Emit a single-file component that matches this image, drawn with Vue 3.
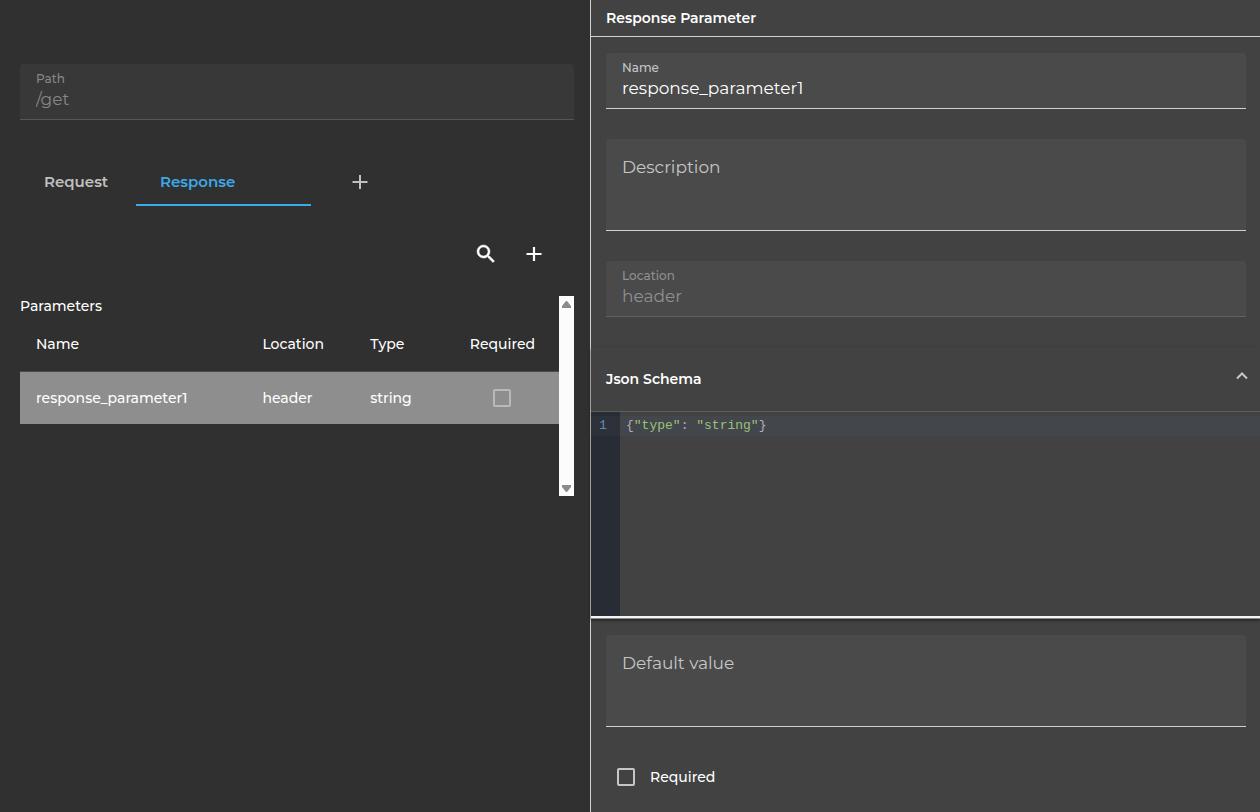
<script setup>
import { ref } from 'vue'

const path = ref('/get')
const name = ref('response_parameter1')
const description = ref('')
const location = ref('header')
const defaultValue = ref('')
const required = ref(false)
const activeTab = ref('Response')
const schemaOpen = ref(true)
const parameters = ref([
  { name: 'response_parameter1', location: 'header', type: 'string', required: false },
])
</script>

<template>
  <div class="page">
    <main class="operation">
      <div class="field disabled">
        <label for="path">Path</label>
        <input id="path" v-model="path" type="text" disabled />
      </div>

      <div class="tabs" role="tablist">
        <button class="tab" :class="{ active: activeTab === 'Request' }" role="tab" @click="activeTab = 'Request'">Request</button>
        <button class="tab wide" :class="{ active: activeTab === 'Response' }" role="tab" @click="activeTab = 'Response'">Response</button>
        <button class="tab add" aria-label="Add response">
          <svg width="24" height="24" viewBox="0 0 24 24"><path d="M4.500 12h15M12 5v14" fill="none" stroke="currentColor" stroke-width="2" /></svg>
        </button>
      </div>

      <div class="toolbar">
        <button class="icon-button" aria-label="Search">
          <svg width="24" height="24" viewBox="0 0 24 24"><path fill="currentColor" stroke="currentColor" stroke-width="0.5" d="M15.5 14h-.79l-.28-.27A6.47 6.47 0 0 0 16 9.5 6.5 6.5 0 1 0 9.5 16c1.61 0 3.09-.59 4.23-1.57l.27.28v.79l5 4.99L20.49 19l-4.99-5zm-6 0C7.01 14 5 11.99 5 9.5S7.01 5 9.5 5 14 7.01 14 9.5 11.99 14 9.5 14z" /></svg>
        </button>
        <button class="icon-button" aria-label="Add parameter">
          <svg width="24" height="24" viewBox="0 0 24 24"><path d="M4.500 12h15M12 5v14" fill="none" stroke="currentColor" stroke-width="2.200" /></svg>
        </button>
      </div>

      <div class="list">
        <div class="list-body">
          <table>
            <caption>Parameters</caption>
            <colgroup>
              <col class="c-name" /><col class="c-location" /><col class="c-type" /><col class="c-required" />
            </colgroup>
            <thead>
              <tr><th>Name</th><th>Location</th><th>Type</th><th class="center">Required</th></tr>
            </thead>
            <tbody>
              <tr v-for="p in parameters" :key="p.name">
                <td>{{ p.name }}</td>
                <td>{{ p.location }}</td>
                <td>{{ p.type }}</td>
                <td class="center"><input v-model="p.required" type="checkbox" :aria-label="'Required: ' + p.name" disabled /></td>
              </tr>
            </tbody>
          </table>
        </div>
        <div class="scroll-track" aria-hidden="true">
          <svg width="15" height="16" viewBox="0 0 15 16"><path d="M7 5h1l4 5v2H3v-2z" fill="#8b8b8b" /></svg>
          <svg width="15" height="16" viewBox="0 0 15 16"><path d="M3 5h9v2l-4 5H7L3 7z" fill="#8b8b8b" /></svg>
        </div>
      </div>
    </main>

    <aside class="detail">
      <h2>Response Parameter</h2>
      <div class="form">
        <div class="field">
          <label for="name">Name</label>
          <input id="name" v-model="name" type="text" />
        </div>
        <div class="field area">
          <label for="description">Description</label>
          <textarea id="description" v-model="description"></textarea>
        </div>
        <div class="field disabled">
          <label for="location">Location</label>
          <input id="location" v-model="location" type="text" disabled />
        </div>
      </div>

      <section class="schema">
        <button class="schema-header" :aria-expanded="schemaOpen" @click="schemaOpen = !schemaOpen">
          <span>Json Schema</span>
          <svg width="12" height="12" viewBox="0 0 12 12"><path d="M1 8.500l5-5 5 5" fill="none" stroke="#c6c6c6" stroke-width="2" /></svg>
        </button>
        <div v-if="schemaOpen" class="editor">
          <div class="gutter"><span>1</span></div>
          <div class="code" role="textbox" aria-label="Json Schema" contenteditable="true" spellcheck="false"><div class="line">{<b>"type"</b>: <b>"string"</b>}</div></div>
        </div>
      </section>

      <div class="form">
        <div class="field area">
          <label for="default">Default value</label>
          <textarea id="default" v-model="defaultValue"></textarea>
        </div>
        <label class="check"><input v-model="required" type="checkbox" /><span>Required</span></label>
      </div>
    </aside>
  </div>
</template>

<style>
body {
  background: #303030;
}
</style>

<style scoped>
.page {
  display: grid;
  grid-template-columns: 590fr 670fr;
  min-height: 100vh;
  color: #fff;
  font: 500 14px/20px Montserrat, Inter, sans-serif;
}
.page * {
  box-sizing: border-box;
}
button,
input,
textarea {
  margin: 0;
  padding: 0;
  border: 0;
  background: none;
  color: inherit;
  font: inherit;
  outline: 0;
}
svg {
  display: block;
}
.operation {
  min-width: 0;
  padding: 64px 16px 16px 20px;
  background: #303030;
}

.field {
  display: flex;
  flex-direction: column;
  height: 56px;
  padding: 5px 16px 0;
  border-bottom: 1px solid #d0d0d0;
  border-radius: 4px 4px 0 0;
  background: #4a4a4a;
}
.field label {
  color: #c6c6c6;
  font-size: 12px;
  line-height: 20px;
}
.field input {
  width: 100%;
  height: 20px;
  font-size: 17px;
  font-weight: 400;
}
.field.disabled {
  border-color: #616161;
}
.field.disabled label,
.field.disabled input {
  color: #909090;
}
.operation .field {
  border-color: #565656;
  background: #383838;
}
.operation .field.disabled label,
.operation .field.disabled input {
  color: #868686;
}
.field.area {
  height: 92px;
  padding-top: 16px;
}
.field.area label {
  font-size: 17px;
  line-height: 24px;
  font-weight: 400;
}
.field textarea {
  flex: 1;
  resize: none;
}

.tabs {
  display: flex;
  height: 48px;
  margin-top: 38px;
}
.tab {
  width: 116px;
  padding: 2px 24px 0;
  border-bottom: 2px solid transparent;
  color: #c0c0c0;
  font-size: 15px;
  font-weight: 600;
  text-align: left;
  cursor: pointer;
}
.tab.wide {
  width: 175px;
}
.tab.active {
  border-color: #3da9e8;
  color: #3da9e8;
}
.tab.add {
  width: 98px;
  padding: 0 37px;
  border: 0;
}
.toolbar {
  display: flex;
  justify-content: flex-end;
  margin: 24px 16px 18px 0;
}
.icon-button {
  width: 48px;
  height: 48px;
  padding: 12px;
  cursor: pointer;
}

.list {
  display: flex;
  height: 200px;
}
.list-body {
  flex: 1;
  min-width: 0;
  overflow: hidden;
}
.scroll-track {
  display: flex;
  flex-direction: column;
  justify-content: space-between;
  width: 15px;
  background: #fcfcfc;
}
table {
  width: 100%;
  border-spacing: 0;
  table-layout: fixed;
}
caption {
  text-align: left;
}
.c-name {
  width: 42%;
}
.c-location {
  width: 20%;
}
.c-type {
  width: 17%;
}
.c-required {
  width: 21%;
}
th,
td {
  padding: 0 16px;
  text-align: left;
}
th {
  height: 55px;
  font-weight: 500;
}
td {
  height: 53px;
  border-top: 1px solid #4b4b4b;
  background: #8e8e8e;
}
.center {
  text-align: center;
}
input[type='checkbox'] {
  appearance: none;
  width: 18px;
  height: 18px;
  border: 2px solid #c6c6c6;
  border-radius: 2px;
}
td input[type='checkbox'] {
  display: block;
  margin: 0 auto;
  border-color: #bababa;
}

.detail {
  min-width: 0;
  border-left: 1px solid #d0d0d0;
  background: #424242;
}
h2 {
  height: 37px;
  margin: 0;
  padding: 8px 15px;
  border-bottom: 1px solid #d0d0d0;
  font-size: 14px;
  line-height: 20px;
  font-weight: 600;
}
.form {
  display: flex;
  flex-direction: column;
  gap: 30px;
  padding: 16px 14px 0 15px;
}
.schema {
  margin: 30px 0 1px;
  border-bottom: 2px solid #f4f4f4;
  box-shadow: 0 1px 0 #8c8c8c, 0 2px 3px rgba(0, 0, 0, 0.6);
}
.schema-header {
  display: flex;
  align-items: center;
  justify-content: space-between;
  width: 100%;
  height: 65px;
  padding: 0 12px 0 15px;
  border-bottom: 1px solid #5c5c5c;
  font-size: 14px;
  font-weight: 600;
  cursor: pointer;
}
.schema-header svg {
  margin-bottom: 6px;
}
.editor {
  display: flex;
  height: 204px;
  font: 13px/20px 'Liberation Mono', monospace;
}
.gutter {
  width: 29px;
  padding-top: 4px;
  background: #282c34;
  color: #6988b0;
}
.gutter span {
  display: block;
  padding-left: 8px;
  background: #2c313a;
}
.code {
  flex: 1;
  padding-top: 4px;
  color: #abb2bf;
  outline: 0;
}
.line {
  padding-left: 6px;
  background: #43464b;
}
.line b {
  color: #98c379;
  font-weight: 400;
}
.check {
  display: flex;
  align-items: center;
  gap: 15px;
  height: 40px;
  padding-left: 11px;
}
</style>
